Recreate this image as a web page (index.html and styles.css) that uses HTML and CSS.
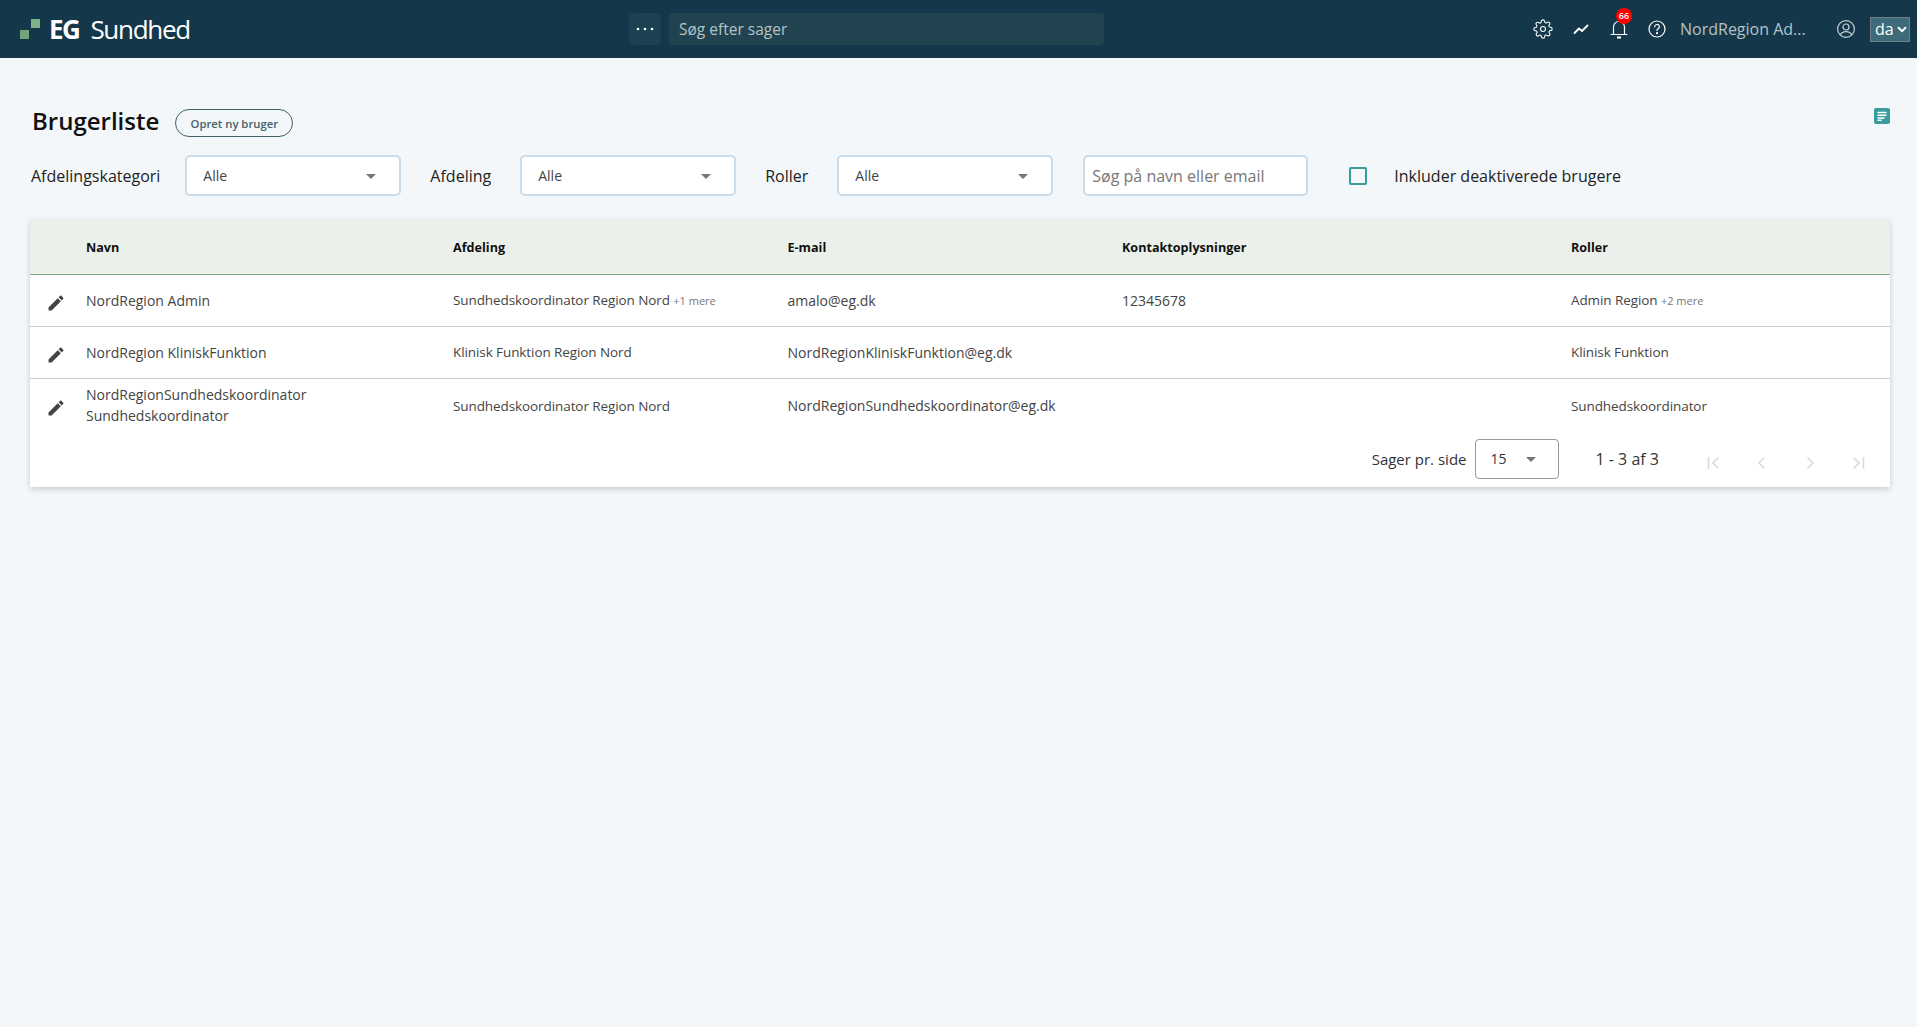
FILE: index.html
```html
<!DOCTYPE html>
<html lang="da">
<head>
    <meta charset="UTF-8">
    <meta name="viewport" content="width=device-width, initial-scale=1.0">
    <title>Brugerliste - EG Sundhed</title>
    <link rel="stylesheet" href="styles.css">
</head>
<body>
    <header class="topbar">
        <div class="brand">
            <svg class="brand-mark" width="20" height="20" viewBox="0 0 20 20"><rect x="0" y="11" width="9" height="9" fill="#6fa577"/><rect x="11" y="0" width="9" height="9" fill="#7fb38a"/></svg>
            <span class="brand-eg">EG</span>
            <span class="brand-name">Sundhed</span>
        </div>
        <div class="search-group">
            <button class="more-btn" aria-label="Mere">
                <svg width="18" height="4" viewBox="0 0 18 4"><circle cx="2" cy="2" r="1.3" fill="#fff"/><circle cx="9" cy="2" r="1.3" fill="#fff"/><circle cx="16" cy="2" r="1.3" fill="#fff"/></svg>
            </button>
            <div class="case-search">Søg efter sager</div>
        </div>
        <div class="top-actions">
            <svg class="top-icon" width="20" height="20" viewBox="0 0 24 24" fill="none" stroke="#fff" stroke-width="1.3" stroke-linejoin="round"><circle cx="12" cy="12" r="3"/><path d="M19.4 15a1.65 1.65 0 0 0 .33 1.82l.06.06a2 2 0 1 1-2.83 2.83l-.06-.06a1.65 1.65 0 0 0-2.82 1.17V21a2 2 0 1 1-4 0v-.09a1.65 1.65 0 0 0-2.82-1.12l-.06.06a2 2 0 1 1-2.83-2.83l.06-.06a1.65 1.65 0 0 0-1.17-2.82H3a2 2 0 1 1 0-4h.09a1.65 1.65 0 0 0 1.12-2.82l-.06-.06a2 2 0 1 1 2.83-2.83l.06.06a1.65 1.65 0 0 0 2.82-1.17V3a2 2 0 1 1 4 0v.09a1.65 1.65 0 0 0 2.82 1.12l.06-.06a2 2 0 1 1 2.83 2.83l-.06.06a1.65 1.65 0 0 0 1.17 2.82H21a2 2 0 1 1 0 4h-.09a1.65 1.65 0 0 0-1.51 1z"/></svg>
            <svg class="top-icon" width="20" height="20" viewBox="0 0 20 20" fill="none" stroke="#fff" stroke-width="1.8" stroke-linecap="round" stroke-linejoin="round"><path d="M3.5 14 L8 9.5 L11 12 L16.5 6.5"/></svg>
            <div class="bell">
                <svg class="top-icon" width="20" height="22" viewBox="0 0 20 22" fill="none" stroke="#fff" stroke-width="1.2"><path d="M4.5 16V9a5.500 5.500 0 0 1 11 0v7"/><path d="M2 16.500h16" stroke-linecap="round"/><path d="M8 19.500h4" stroke-width="2"/></svg>
                <span class="bell-badge">66</span>
            </div>
            <svg class="top-icon help-icon" width="20" height="20" viewBox="0 0 20 20" fill="none" stroke="#fff" stroke-width="1.2"><circle cx="10" cy="10" r="8"/><path d="M7.700 7.800a2.300 2.300 0 1 1 3.400 2c-.8.500-1.100.9-1.100 1.800" stroke-linecap="round"/><circle cx="10" cy="14.200" r=".5" fill="#fff"/></svg>
            <span class="top-user">NordRegion Ad...</span>
            <svg class="top-icon user-icon" width="20" height="20" viewBox="0 0 20 20" fill="none" stroke="#c4d0d5" stroke-width="1.2"><circle cx="10" cy="10" r="8.400"/><circle cx="10" cy="8" r="3"/><path d="M4.300 16c1-2.400 3-3.400 5.700-3.400s4.700 1 5.700 3.400"/></svg>
            <div class="lang">da
                <svg width="10" height="7" viewBox="0 0 10 7" fill="none" stroke="#fff" stroke-width="2"><path d="M1 1.200 L5 5.200 L9 1.200"/></svg>
            </div>
        </div>
    </header>

    <main class="page">
        <div class="title-row">
            <h1>Brugerliste</h1>
            <button class="create-btn">Opret ny bruger</button>
            <svg class="note-icon" width="16" height="16" viewBox="0 0 16 16"><rect width="16" height="16" rx="2" fill="#3a9b9e"/><path d="M3.500 4.500h9M3.500 7.200h9M3.500 9.900h7M3.500 12.300h4" stroke="#fff" stroke-width="1.500"/></svg>
        </div>

        <div class="filters">
            <label class="filter-label">Afdelingskategori</label>
            <div class="select select-kategori">Alle<span class="caret"></span></div>
            <label class="filter-label">Afdeling</label>
            <div class="select select-afdeling">Alle<span class="caret"></span></div>
            <label class="filter-label">Roller</label>
            <div class="select select-roller">Alle<span class="caret"></span></div>
            <div class="name-search">Søg på navn eller email</div>
            <span class="checkbox"></span>
            <span class="check-label">Inkluder deaktiverede brugere</span>
        </div>

        <section class="card">
            <table class="users">
                <colgroup>
                    <col class="col-edit"><col class="col-name"><col class="col-dept"><col class="col-mail"><col class="col-contact"><col>
                </colgroup>
                <thead>
                    <tr><th></th><th>Navn</th><th>Afdeling</th><th>E-mail</th><th>Kontaktoplysninger</th><th>Roller</th></tr>
                </thead>
                <tbody>
                    <tr>
                        <td class="edit"><svg width="20" height="20" viewBox="0 0 24 24"><path fill="#444" d="M3 17.250V21h3.750L17.810 9.940l-3.750-3.750L3 17.250zM20.710 7.040c.39-.39.39-1.020 0-1.410l-2.340-2.340c-.39-.39-1.020-.39-1.410 0l-1.830 1.830 3.750 3.750 1.830-1.830z"/></svg></td>
                        <td>NordRegion Admin</td>
                        <td class="small">Sundhedskoordinator Region Nord <span class="more">+1 mere</span></td>
                        <td>amalo@eg.dk</td>
                        <td>12345678</td>
                        <td class="small">Admin Region <span class="more">+2 mere</span></td>
                    </tr>
                    <tr>
                        <td class="edit"><svg width="20" height="20" viewBox="0 0 24 24"><path fill="#444" d="M3 17.250V21h3.750L17.810 9.940l-3.750-3.750L3 17.250zM20.710 7.040c.39-.39.39-1.020 0-1.410l-2.340-2.340c-.39-.39-1.020-.39-1.410 0l-1.830 1.830 3.750 3.750 1.830-1.830z"/></svg></td>
                        <td>NordRegion KliniskFunktion</td>
                        <td class="small">Klinisk Funktion Region Nord</td>
                        <td>NordRegionKliniskFunktion@eg.dk</td>
                        <td></td>
                        <td class="small">Klinisk Funktion</td>
                    </tr>
                    <tr class="tall">
                        <td class="edit"><svg width="20" height="20" viewBox="0 0 24 24"><path fill="#444" d="M3 17.250V21h3.750L17.810 9.940l-3.750-3.750L3 17.250zM20.710 7.040c.39-.39.39-1.020 0-1.410l-2.340-2.340c-.39-.39-1.020-.39-1.410 0l-1.830 1.830 3.750 3.750 1.830-1.830z"/></svg></td>
                        <td class="two-line">NordRegionSundhedskoordinator<br>Sundhedskoordinator</td>
                        <td class="small">Sundhedskoordinator Region Nord</td>
                        <td>NordRegionSundhedskoordinator@eg.dk</td>
                        <td></td>
                        <td class="small">Sundhedskoordinator</td>
                    </tr>
                </tbody>
            </table>
            <div class="pager">
                <span class="pager-label">Sager pr. side</span>
                <div class="page-size">15<span class="caret"></span></div>
                <span class="pager-range">1 - 3 af 3</span>
                <div class="pager-nav">
                    <svg width="14" height="14" viewBox="0 0 14 14" fill="none" stroke="#d9d9d9" stroke-width="1.500"><path d="M1.500 1v12M11.500 1.500 L6 7 L11.500 12.500"/></svg>
                    <svg width="14" height="14" viewBox="0 0 14 14" fill="none" stroke="#d9d9d9" stroke-width="1.500"><path d="M9.500 1.500 L4 7 L9.500 12.500"/></svg>
                    <svg width="14" height="14" viewBox="0 0 14 14" fill="none" stroke="#d9d9d9" stroke-width="1.500"><path d="M4.500 1.500 L10 7 L4.500 12.500"/></svg>
                    <svg width="14" height="14" viewBox="0 0 14 14" fill="none" stroke="#d9d9d9" stroke-width="1.500"><path d="M2.500 1.500 L8 7 L2.500 12.500M12.500 1v12"/></svg>
                </div>
            </div>
        </section>
    </main>
</body>
</html>
```

FILE: styles.css
```css
* {
    margin: 0;
    padding: 0;
    box-sizing: border-box;
}

body {
    font-family: "Open Sans", "Liberation Sans", sans-serif;
    background: #f3f7fa;
    color: #222;
    min-height: 100vh;
}

/* top bar */
.topbar {
    height: 58px;
    background: #14384a;
    display: flex;
    align-items: center;
    padding: 0 7px 0 20px;
}

.brand {
    display: flex;
    align-items: center;
    width: 609px;
    color: #fff;
    font-size: 26px;
    line-height: 34px;
}

.brand-mark {
    margin-right: 10px;
    flex: none;
}

.brand-eg {
    font-weight: 700;
    margin-right: 11px;
    letter-spacing: -1.5px;
    margin-left: -1px;
}

.brand-name {
    font-weight: 400;
    letter-spacing: -1.300px;
}

.search-group {
    display: flex;
    gap: 8px;
    height: 32px;
}

.more-btn {
    width: 32px;
    border: none;
    border-radius: 4px;
    background: #1c4150;
    display: flex;
    align-items: center;
    justify-content: center;
}

.case-search {
    width: 435px;
    border-radius: 4px;
    background: #20434f;
    color: #b4c2c7;
    font-size: 15.500px;
    line-height: 32px;
    padding-left: 10px;
}

.top-actions {
    margin-left: auto;
    display: flex;
    align-items: center;
}

.top-icon {
    display: block;
    margin-right: 18px;
}

.help-icon {
    margin-right: 13px;
}

.bell {
    position: relative;
}

.bell-badge {
    position: absolute;
    top: -10px;
    left: 7px;
    width: 16px;
    height: 16px;
    border-radius: 50%;
    background: #f00;
    color: #fff;
    font-size: 9px;
    font-weight: 600;
    line-height: 16px;
    text-align: center;
}

.top-user {
    width: 156px;
    color: #b4c2c7;
    font-size: 16px;
    white-space: nowrap;
}

.user-icon {
    margin-right: 14px;
}

.lang {
    width: 40px;
    height: 25px;
    background: #3d6b7a;
    border: 1px solid #6f7f85;
    color: #fff;
    font-size: 16px;
    line-height: 23px;
    padding-left: 4px;
    display: flex;
    align-items: center;
    gap: 3px;
}

/* page */
.page {
    padding: 0 27px 0 30px;
}

.title-row {
    display: flex;
    align-items: center;
    height: 28px;
    margin-top: 51px;
    padding-left: 2px;
}

.title-row h1 {
    font-size: 24px;
    font-weight: 600;
    color: #111;
    margin: 0 16px 5px 0;
}

.create-btn {
    width: 118px;
    height: 28px;
    border: 1px solid #3f6268;
    border-radius: 14px;
    background: transparent;
    color: #46626a;
    font-family: inherit;
    font-size: 11.300px;
    font-weight: 600;
}

.note-icon {
    margin-left: auto;
    align-self: flex-start;
    margin-top: -1px;
}

.filters {
    display: flex;
    align-items: center;
    height: 41px;
    margin-top: 18px;
    font-size: 16px;
}

.filter-label {
    margin-left: 1px;
    color: #222;
}

.select {
    position: relative;
    height: 41px;
    background: #fff;
    border: 2px solid #c9dcec;
    border-radius: 5px;
    font-size: 14px;
    line-height: 37px;
    padding-left: 16px;
    color: #444;
}

.select-kategori {
    width: 216px;
    margin: 0 28px 0 25px;
}

.select-afdeling {
    width: 216px;
    margin: 0 28px 0 29px;
}

.select-roller {
    width: 216px;
    margin: 0 30px 0 29px;
}

.caret {
    position: absolute;
    right: 23px;
    top: 17px;
    border-left: 5.500px solid transparent;
    border-right: 5.500px solid transparent;
    border-top: 5.500px solid #777;
}

.name-search {
    width: 225px;
    height: 41px;
    background: #fff;
    border: 2px solid #c9dcec;
    border-radius: 5px;
    color: #777;
    line-height: 39px;
    padding-left: 7px;
}

.checkbox {
    width: 18px;
    height: 18px;
    border: 2px solid #3a9b9e;
    border-radius: 2px;
    margin: 0 27px 0 41px;
}

.check-label {
    color: #222;
}

/* table card */
.card {
    margin-top: 24px;
    height: 267px;
    background: #fff;
    box-shadow: 0 2px 6px rgba(0, 0, 0, 0.18);
}

.users {
    width: 100%;
    table-layout: fixed;
    border-collapse: collapse;
    font-size: 14px;
    color: #444;
}

.col-edit { width: 56px; }
.col-name { width: 367px; }
.col-dept { width: 334.500px; }
.col-mail { width: 334.500px; }
.col-contact { width: 449px; }

.users th {
    height: 54px;
    padding-top: 1px;
    background: #ebf1ea;
    border-bottom: 1px solid #7fa97f;
    text-align: left;
    font-size: 12.600px;
    font-weight: 700;
    color: #111;
}

.users td {
    height: 52px;
    border-bottom: 1px solid #c9c9c9;
    line-height: 21px;
    vertical-align: middle;
}

.users td.small {
    font-size: 13.500px;
    letter-spacing: -0.09px;
    padding-top: 1px;
}

.users tr.tall td {
    height: 55px;
    border-bottom: none;
}

.users tr.tall td.two-line {
    padding-bottom: 2px;
}

.users td.edit {
    padding: 5px 0 0 0;
}

.edit svg {
    display: block;
    margin-left: 16px;
}

.more {
    font-size: 11px;
    color: #777;
    letter-spacing: 0;
}

.pager {
    display: flex;
    align-items: center;
    justify-content: flex-end;
    padding: 6px 25px 0 0;
    font-size: 15px;
    color: #333;
}

.page-size {
    position: relative;
    width: 84px;
    height: 40px;
    margin: 0 37px 0 8px;
    border: 1px solid #9a9a9a;
    border-radius: 4px;
    font-size: 14px;
    line-height: 38px;
    padding-left: 15px;
}

.page-size .caret {
    right: 22px;
    top: 17px;
    border-left-width: 5px;
    border-right-width: 5px;
    border-top-width: 5px;
}

.pager-range {
    font-size: 16px;
}

.pager-nav {
    display: flex;
    gap: 34px;
    margin-left: 48px;
    padding-top: 7px;
}
```
